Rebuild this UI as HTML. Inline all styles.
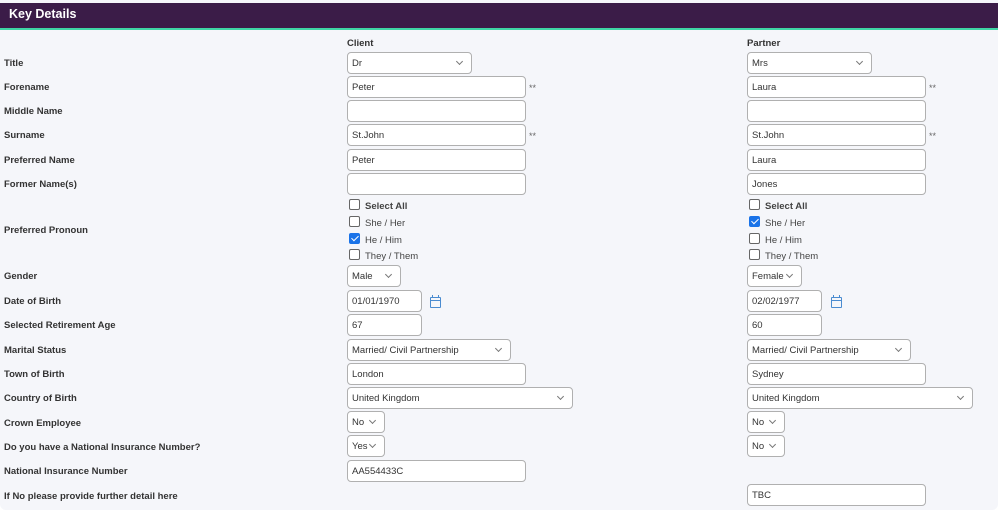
<!DOCTYPE html>
<html><head><style>
body{margin:0;width:998px;height:514px;background:#fff;font-family:"Liberation Sans",sans-serif;position:relative;overflow:hidden;color:#333}
.panel{position:absolute;left:0;top:0;width:998px;height:510px;background:#f5f6fa;border-radius:0 0 6px 6px}
.hdr{position:absolute;left:0;top:3px;width:998px;height:25px;background:#3b1c48;color:#fff;font-weight:bold;font-size:12.5px;line-height:23px;padding-left:9px;box-sizing:border-box}
.grn{position:absolute;left:0;top:28px;width:998px;height:2px;background:#3fd5a5}
.l{position:absolute;left:4px;font-size:9.5px;font-weight:bold;color:#333;line-height:12px;margin-top:1px}
.h{position:absolute;font-size:9.5px;font-weight:bold;color:#333;margin-top:1px}
.b{position:absolute;height:22px;background:#fff;border:1px solid #b0b0b0;border-radius:4px;box-sizing:border-box;font-size:9.5px;line-height:22px;padding-left:4px;color:#333}
.s::after{content:"";position:absolute;right:9px;top:6px;width:4px;height:4px;border-right:1px solid #777;border-bottom:1px solid #777;transform:rotate(45deg)}
.st{position:absolute;font-size:9px;color:#666;margin-top:2px}
.cb{position:absolute;font-size:9.5px;color:#444;line-height:12px}
.cb i{display:inline-block;width:9px;height:9px;border:1px solid #666;border-radius:2px;vertical-align:-1px;margin-right:5px;background:#fff;position:relative}
.cb i.on{background:#1a73e8;border-color:#1a73e8}
.cb i.on::after{content:"";position:absolute;left:2.5px;top:0px;width:3px;height:6px;border-right:1.5px solid #fff;border-bottom:1.5px solid #fff;transform:rotate(45deg)}
.cal{position:absolute;width:9px;height:9px;border:1px solid #4a8bd0;border-radius:1px}
.cal::before{content:"";position:absolute;left:0;right:0;top:2px;height:1px;background:#4a8bd0}
.cal::after{content:"";position:absolute;left:1px;top:-3px;width:5px;height:2px;border-left:1px solid #4a8bd0;border-right:1px solid #4a8bd0}
</style></head><body>
<div class="panel"></div>
<div class="hdr">Key Details</div>
<div class="grn"></div>
<div class="h" style="left:347px;top:37px">Client</div>
<div class="h" style="left:747px;top:37px">Partner</div>

<div class="l" style="top:57px">Title</div>
<div class="l" style="top:81px">Forename</div>
<div class="l" style="top:105px">Middle Name</div>
<div class="l" style="top:129px">Surname</div>
<div class="l" style="top:154px">Preferred Name</div>
<div class="l" style="top:178px">Former Name(s)</div>
<div class="l" style="top:224px">Preferred Pronoun</div>
<div class="l" style="top:270px">Gender</div>
<div class="l" style="top:295px">Date of Birth</div>
<div class="l" style="top:319px">Selected Retirement Age</div>
<div class="l" style="top:344px">Marital Status</div>
<div class="l" style="top:368px">Town of Birth</div>
<div class="l" style="top:392px">Country of Birth</div>
<div class="l" style="top:417px">Crown Employee</div>
<div class="l" style="top:441px">Do you have a National Insurance Number?</div>
<div class="l" style="top:465px">National Insurance Number</div>
<div class="l" style="top:490px">If No please provide further detail here</div>

<!-- client -->
<div class="b s" style="left:347px;top:52px;width:125px">Dr</div>
<div class="b" style="left:347px;top:76px;width:179px">Peter</div><div class="st" style="left:529px;top:81px">**</div>
<div class="b" style="left:347px;top:100px;width:179px"></div>
<div class="b" style="left:347px;top:124px;width:179px">St.John</div><div class="st" style="left:529px;top:129px">**</div>
<div class="b" style="left:347px;top:149px;width:179px">Peter</div>
<div class="b" style="left:347px;top:173px;width:179px"></div>
<div class="cb" style="left:349px;top:199px"><i></i><b>Select All</b></div>
<div class="cb" style="left:349px;top:216px"><i></i>She / Her</div>
<div class="cb" style="left:349px;top:233px"><i class="on"></i>He / Him</div>
<div class="cb" style="left:349px;top:249px"><i></i>They / Them</div>
<div class="b s" style="left:347px;top:265px;width:54px">Male</div>
<div class="b" style="left:347px;top:290px;width:75px">01/01/1970</div><div class="cal" style="left:430px;top:297px"></div>
<div class="b" style="left:347px;top:314px;width:75px">67</div>
<div class="b s" style="left:347px;top:339px;width:164px">Married/ Civil Partnership</div>
<div class="b" style="left:347px;top:363px;width:179px">London</div>
<div class="b s" style="left:347px;top:387px;width:226px">United Kingdom</div>
<div class="b s" style="left:347px;top:411px;width:38px">No</div>
<div class="b s" style="left:347px;top:435px;width:38px">Yes</div>
<div class="b" style="left:347px;top:460px;width:179px">AA554433C</div>

<!-- partner -->
<div class="b s" style="left:747px;top:52px;width:125px">Mrs</div>
<div class="b" style="left:747px;top:76px;width:179px">Laura</div><div class="st" style="left:929px;top:81px">**</div>
<div class="b" style="left:747px;top:100px;width:179px"></div>
<div class="b" style="left:747px;top:124px;width:179px">St.John</div><div class="st" style="left:929px;top:129px">**</div>
<div class="b" style="left:747px;top:149px;width:179px">Laura</div>
<div class="b" style="left:747px;top:173px;width:179px">Jones</div>
<div class="cb" style="left:749px;top:199px"><i></i><b>Select All</b></div>
<div class="cb" style="left:749px;top:216px"><i class="on"></i>She / Her</div>
<div class="cb" style="left:749px;top:233px"><i></i>He / Him</div>
<div class="cb" style="left:749px;top:249px"><i></i>They / Them</div>
<div class="b s" style="left:747px;top:265px;width:55px">Female</div>
<div class="b" style="left:747px;top:290px;width:75px">02/02/1977</div><div class="cal" style="left:831px;top:297px"></div>
<div class="b" style="left:747px;top:314px;width:75px">60</div>
<div class="b s" style="left:747px;top:339px;width:164px">Married/ Civil Partnership</div>
<div class="b" style="left:747px;top:363px;width:179px">Sydney</div>
<div class="b s" style="left:747px;top:387px;width:226px">United Kingdom</div>
<div class="b s" style="left:747px;top:411px;width:38px">No</div>
<div class="b s" style="left:747px;top:435px;width:38px">No</div>
<div class="b" style="left:747px;top:484px;width:179px">TBC</div>
</body></html>
